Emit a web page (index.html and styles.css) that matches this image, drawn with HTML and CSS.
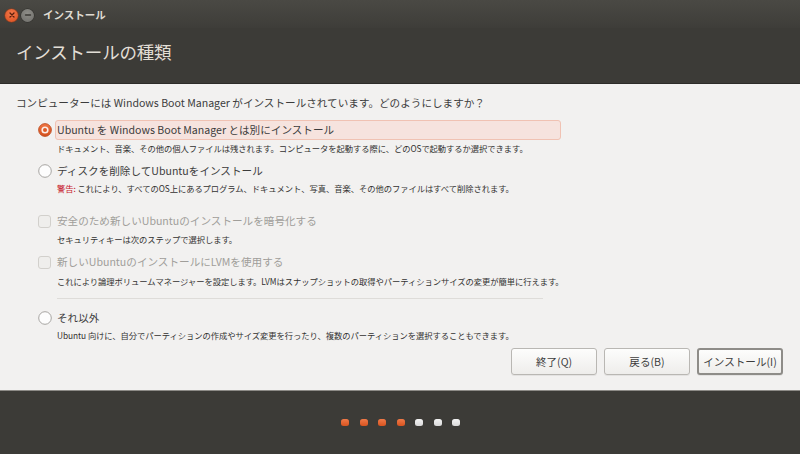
FILE: index.html
```html
<!DOCTYPE html>
<html lang="ja">
<head>
<meta charset="utf-8">
<link rel="stylesheet" href="styles.css">
</head>
<body>
<div class="window">
  <div class="titlebar">
    <span class="wbtn close"><svg width="12" height="12" viewBox="0 0 12 12"><path d="M4 4L8 8M8 4L4 8" stroke="#5a1e0c" stroke-width="1.3" stroke-linecap="round"/></svg></span>
    <span class="wbtn mini"><svg width="12" height="12" viewBox="0 0 12 12"><path d="M3.5 6H8.5" stroke="#3a3935" stroke-width="1.4" stroke-linecap="round"/></svg></span>
    <span class="wtitle">インストール</span>
  </div>
  <div class="header">
    <h1 class="htitle">インストールの種類</h1>
  </div>
  <div class="content">
    <p class="question">コンピューターには Windows Boot Manager がインストールされています。どのようにしますか？</p>

    <div class="opt opt1">
      <span class="radio on"><svg width="14" height="14" viewBox="0 0 14 14"><defs><linearGradient id="og" x1="0" y1="0" x2="0" y2="1"><stop offset="0" stop-color="#f07746"/><stop offset="1" stop-color="#d4501d"/></linearGradient></defs><circle cx="7" cy="7" r="6.4" fill="url(#og)" stroke="#b9461a" stroke-width="0.8"/><circle cx="7" cy="7" r="3.6" fill="#fbeee8"/><circle cx="7" cy="7" r="2" fill="#dd5a26"/></svg></span>
      <span class="label hl">Ubuntu を Windows Boot Manager とは別にインストール</span>
    </div>
    <p class="desc d1">ドキュメント、音楽、その他の個人ファイルは残されます。コンピュータを起動する際に、どのOSで起動するか選択できます。</p>

    <div class="opt opt2">
      <span class="radio"><svg width="14" height="14" viewBox="0 0 14 14"><circle cx="7" cy="7" r="6.3" fill="#fdfdfd" stroke="#9e9c98" stroke-width="0.9"/></svg></span>
      <span class="label">ディスクを削除してUbuntuをインストール</span>
    </div>
    <p class="desc d2"><span class="warn">警告:</span> これにより、すべてのOS上にあるプログラム、ドキュメント、写真、音楽、その他のファイルはすべて削除されます。</p>

    <div class="opt opt3 disabled">
      <span class="check"></span>
      <span class="label">安全のため新しいUbuntuのインストールを暗号化する</span>
    </div>
    <p class="desc d3">セキュリティキーは次のステップで選択します。</p>

    <div class="opt opt4 disabled">
      <span class="check"></span>
      <span class="label">新しいUbuntuのインストールにLVMを使用する</span>
    </div>
    <p class="desc d4">これにより論理ボリュームマネージャーを設定します。LVMはスナップショットの取得やパーティションサイズの変更が簡単に行えます。</p>

    <div class="sep"></div>

    <div class="opt opt5">
      <span class="radio"><svg width="14" height="14" viewBox="0 0 14 14"><circle cx="7" cy="7" r="6.3" fill="#fdfdfd" stroke="#9e9c98" stroke-width="0.9"/></svg></span>
      <span class="label">それ以外</span>
    </div>
    <p class="desc d5">Ubuntu 向けに、自分でパーティションの作成やサイズ変更を行ったり、複数のパーティションを選択することもできます。</p>

    <div class="buttons">
      <button class="btn">終了(Q)</button>
      <button class="btn">戻る(B)</button>
      <button class="btn focus">インストール(I)</button>
    </div>
  </div>
  <div class="footer">
    <span class="dot done"></span>
    <span class="dot done"></span>
    <span class="dot done"></span>
    <span class="dot done"></span>
    <span class="dot"></span>
    <span class="dot"></span>
    <span class="dot"></span>
  </div>
</div>
</body>
</html>
```

FILE: styles.css
```css
* { box-sizing: border-box; }
html, body {
  margin: 0;
  padding: 0;
  background: #3c3b37;
}
body {
  width: 800px;
  height: 454px;
  overflow: hidden;
  font-family: "Noto Sans CJK JP", "Noto Sans", sans-serif;
}
.window {
  width: 800px;
  height: 454px;
  display: flex;
  flex-direction: column;
}
.titlebar {
  height: 28px;
  display: flex;
  align-items: center;
  padding-left: 5px;
  background: linear-gradient(#4a4944, #3e3d39);
}
.wbtn {
  width: 13px;
  height: 13px;
  border-radius: 50%;
  display: flex;
  align-items: center;
  justify-content: center;
  margin-top: 2px;
}
.wbtn svg { width: 12px; height: 12px; }
.close {
  background: radial-gradient(circle at 50% 35%, #f27a4c, #dc4d1c);
  box-shadow: 0 0 0 0.5px #9b3a15;
}
.mini {
  margin-left: 3px;
  background: radial-gradient(circle at 50% 35%, #8e8d88, #6e6d69);
  box-shadow: 0 0 0 0.5px #2e2d2a;
}
.wtitle {
  margin-left: 9px;
  color: #dfdbd2;
  font-size: 10.5px;
  font-weight: bold;
  margin-top: 1px;
}
.header {
  height: 56px;
  background: #3c3b37;
  padding-left: 16px;
  padding-bottom: 8px;
  display: flex;
  align-items: center;
  border-bottom: 1px solid #2d2c29;
}
.htitle {
  margin: 0;
  font-weight: normal;
  font-size: 17.5px;
  color: #e2ded6;
  letter-spacing: -0.2px;
}
.content {
  height: 306px;
  background: #f2f1f0;
  padding: 11px 17px 0 16px;
  display: flex;
  flex-direction: column;
  color: #3c3c3c;
}
.question {
  margin: 0;
  font-size: 10.6px;
  line-height: 16px;
  height: 16px;
}
.opt {
  display: flex;
  align-items: center;
  height: 20px;
  padding-left: 22px;
}
.opt1 { margin-top: 9px; }
.opt2 { margin-top: 7px; }
.opt3 { margin-top: 17px; }
.opt4 { margin-top: 7px; }
.radio {
  width: 14px;
  height: 14px;
  display: block;
  flex: none;
}
.radio svg { display: block; }
.label {
  margin-left: 4px;
  font-size: 10.6px;
  line-height: 18px;
  height: 20px;
  display: flex;
  align-items: center;
  padding-left: 1px;
}
.hl {
  width: 506px;
  background: #f6e3de;
  border: 1px solid #f0c2b3;
  border-radius: 3px;
  margin-left: 3px;
}
.check {
  width: 13px;
  height: 13px;
  border: 1px solid #d2d0cc;
  border-radius: 3px;
  background: #efeeec;
  flex: none;
}
.disabled .label {
  color: #a09e9a;
  margin-left: 5px;
}
.desc {
  margin: 0;
  padding-left: 41px;
  font-size: 8.3px;
  line-height: 12px;
  height: 12px;
  color: #333230;
  white-space: nowrap;
  letter-spacing: -0.05px;
}
.d1 { margin-top: 2px; }
.d2 { margin-top: 1px; }
.d3 { margin-top: 2px; }
.d4 { margin-top: 3px; }
.warn { color: #c7162b; }
.sep {
  margin: 11px 0 0 41px;
  width: 486px;
  height: 1px;
  background: #dedcd9;
}
.opt5 { margin-top: 9px; }
.d5 { margin-top: 1px; }
.buttons {
  display: flex;
  justify-content: flex-end;
  gap: 7px;
  margin-top: 7px;
}
.btn {
  width: 86px;
  height: 27px;
  border: 1px solid #b9b7b3;
  border-radius: 3px;
  background: linear-gradient(#fdfdfc, #eeedeb);
  font-family: "Noto Sans CJK JP", "Noto Sans", sans-serif;
  font-size: 10.6px;
  color: #3c3c3c;
  padding: 0;
  box-shadow: 0 1px 0 rgba(0,0,0,0.06);
}
.btn.focus {
  border: 2px solid #8e8c88;
}
.footer {
  flex: 1;
  background: #3c3b37;
  border-top: 1px solid #8d8b87;
  display: flex;
  justify-content: center;
  align-items: center;
  gap: 10.5px;
  padding-left: 1px;
}
.dot {
  width: 8px;
  height: 7px;
  border-radius: 2.5px;
  background: linear-gradient(#f3f3f3, #d9d9d9);
}
.dot.done {
  background: linear-gradient(#f07a48, #d8531f);
}
```
